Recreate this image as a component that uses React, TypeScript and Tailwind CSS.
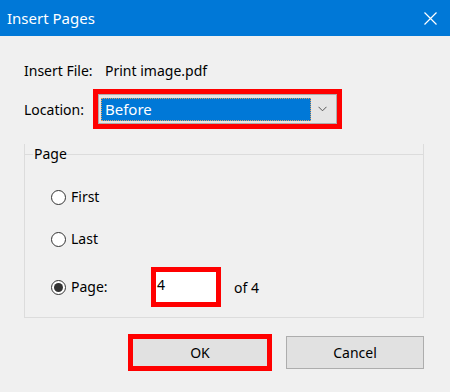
import React from 'react';

const font = { fontFamily: '"Noto Sans", "Open Sans", Arial, sans-serif' };

function Radio({ checked, label }: { checked?: boolean; label: string }) {
  return (
    <div className="flex items-center">
      <span className="flex h-[15px] w-[15px] items-center justify-center rounded-full border border-[#333] bg-white">
        {checked && <span className="h-[9px] w-[9px] rounded-full bg-[#333]" />}
      </span>
      <span className="ml-[5px] leading-[20px]">{label}</span>
    </div>
  );
}

export default function App() {
  return (
    <div
      className="flex h-[392px] w-[450px] flex-col bg-[#f0f0f0] text-[14px] text-black"
      style={font}
    >
      {/* ── Title bar ─────────────────────────────── */}
      <div className="flex h-[36px] shrink-0 items-center justify-between bg-[#0078d7] pl-[7px] pr-[13px] text-white">
        <span className="text-[15px]">Insert Pages</span>
        <svg width="13" height="13" viewBox="0 0 13 13" fill="none" stroke="white" strokeWidth="1.2">
          <path d="M0.5 0.5 L12.5 12.5 M12.5 0.5 L0.5 12.5" />
        </svg>
      </div>

      {/* ── Body ──────────────────────────────────── */}
      <div className="flex flex-col px-[24px]">
        <div className="mt-[25px] flex h-[20px] items-center leading-[20px]">
          <span className="w-[81px]">Insert File:</span>
          <span>Print image.pdf</span>
        </div>

        <div className="mt-[8px] flex items-center">
          <span className="w-[69px]">Location:</span>
          <div className="h-[40px] w-[249px] border-[5px] border-[#ff0000]">
            <div className="flex h-full w-full items-center border border-[#adadad] bg-[#e5e5e5] p-[2px]">
              <div className="flex h-[23px] w-[210px] items-center border border-dotted border-[#e0a060] bg-[#0078d7] pl-[3px] text-[15px] text-white">
                Before
              </div>
              <div className="flex flex-1 items-center justify-center">
                <svg width="9" height="6" viewBox="0 0 9 6" fill="none" stroke="#555" strokeWidth="1">
                  <path d="M0.5 0.8 L4.5 4.8 L8.5 0.8" />
                </svg>
              </div>
            </div>
          </div>
        </div>

        {/* ── Page group ──────────────────────────── */}
        <fieldset className="mt-[15px] h-[174px] w-[400px] border border-t-0 border-[#dcdcdc]">
          <div className="relative">
            <div className="absolute left-0 top-[10px] h-px w-[8px] bg-[#dcdcdc]" />
            <div className="absolute left-[42px] right-0 top-[10px] h-px bg-[#dcdcdc]" />
            <div className="ml-[9px] h-[20px] leading-[20px]">Page</div>
          </div>
          <div className="flex flex-col pl-[26px]">
            <div className="mt-[23px]">
              <Radio label="First" />
            </div>
            <div className="mt-[22px]">
              <Radio label="Last" />
            </div>
            <div className="mt-[18px] flex items-center">
              <div className="w-[100px]">
                <Radio checked label="Page:" />
              </div>
              <div className="h-[40px] w-[70px] border-[5px] border-[#ff0000] bg-white pl-[1px] pt-[3px] leading-[20px]">
                4
              </div>
              <span className="ml-[13px]">of 4</span>
            </div>
          </div>
        </fieldset>

        {/* ── Buttons ─────────────────────────────── */}
        <div className="mt-[16px] flex items-center justify-end pr-[2px]">
          <div className="h-[37px] w-[144px] border-[5px] border-[#ff0000] bg-[#e1e1e1]">
            <div className="flex h-full items-center justify-center">OK</div>
          </div>
          <div className="ml-[14px] flex h-[33px] w-[138px] items-center justify-center border border-[#adadad] bg-[#e1e1e1]">
            Cancel
          </div>
        </div>
      </div>
    </div>
  );
}
